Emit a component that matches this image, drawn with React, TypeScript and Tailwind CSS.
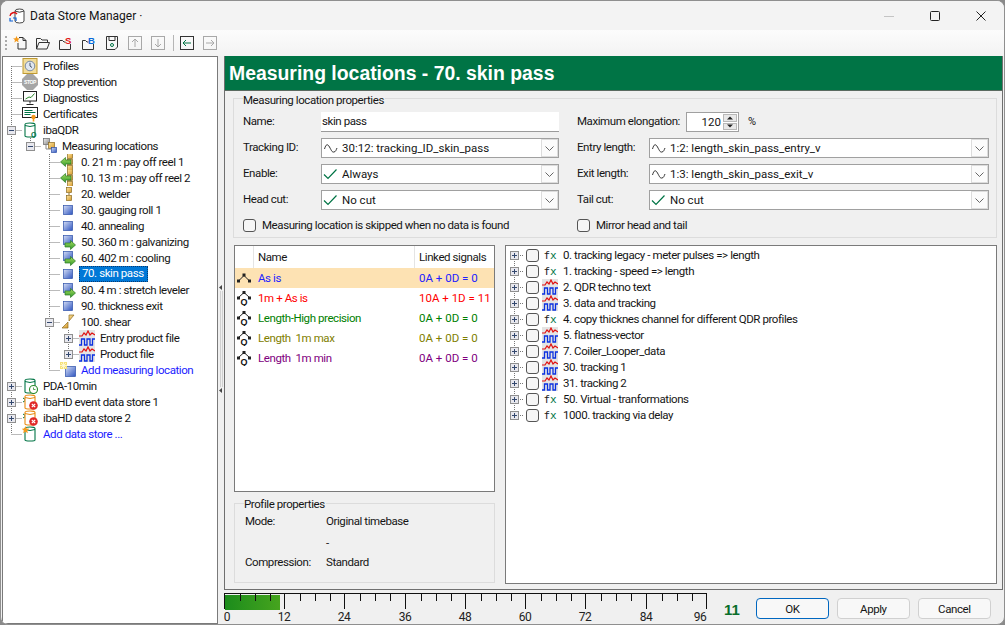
import React from "react";

function Exp({ open }: { open?: boolean }) {
  return (
    <svg width="9" height="9" viewBox="0 0 9 9" className="shrink-0">
      <rect x="0.5" y="0.5" width="8" height="8" fill="#e8e8ee" stroke="#8f8f8f" />
      <path d={open ? "M2 4.5h5" : "M2 4.5h5M4.5 2v5"} stroke="#33486e" />
    </svg>
  );
}

const Square = ({ x = 2, y = 2, s = 10, c = "blue" }: { x?: number; y?: number; s?: number; c?: "blue" | "gold" | "gray" }) => {
  const f = c === "blue" ? "url(#gb)" : c === "gold" ? "url(#gg)" : "url(#ggr)";
  const st = c === "blue" ? "#2c4fa8" : c === "gold" ? "#8a6a20" : "#666";
  return <rect x={x + 0.5} y={y + 0.5} width={s - 1} height={s - 1} fill={f} stroke={st} strokeWidth="0.7" />;
};

const Defs = () => (
  <svg width="0" height="0" className="absolute">
    <defs>
      <linearGradient id="gb" x1="0" y1="0" x2="1" y2="1">
        <stop offset="0" stopColor="#d5def5" />
        <stop offset="1" stopColor="#2f55c0" />
      </linearGradient>
      <linearGradient id="gg" x1="0" y1="0" x2="1" y2="1">
        <stop offset="0" stopColor="#fbe4a0" />
        <stop offset="1" stopColor="#d89a2a" />
      </linearGradient>
      <linearGradient id="ggr" x1="0" y1="0" x2="1" y2="1">
        <stop offset="0" stopColor="#eee" />
        <stop offset="1" stopColor="#888" />
      </linearGradient>
      <linearGradient id="ga" x1="0" y1="0" x2="0" y2="1">
        <stop offset="0" stopColor="#a8dc60" />
        <stop offset="1" stopColor="#2f9a2a" />
      </linearGradient>
    </defs>
  </svg>
);

const I = ({ children, w = 16, h = 16 }: { children: React.ReactNode; w?: number; h?: number }) => (
  <svg width={w} height={h} viewBox={`0 0 ${w} ${h}`} className="shrink-0 block">
    {children}
  </svg>
);

const ArrowL = () => <path d="M0.5 8 L5.5 3.5 V6 H11 V10 H5.5 V12.5 Z" fill="url(#ga)" stroke="#2a7a22" strokeWidth="0.7" />;
const ArrowR = () => <path d="M15.5 11 L10.5 6.5 V9 H5 V13 H10.5 V15.5 Z" fill="url(#ga)" stroke="#2a7a22" strokeWidth="0.7" />;

const IcoColL = () => (
  <I>
    <Square x={7} y={-1} s={6} c="gold" />
    <Square x={7} y={5} s={6} c="gold" />
    <Square x={7} y={11} s={6} c="gold" />
    <ArrowL />
  </I>
);
const IcoWeld = () => (
  <I>
    <Square x={6} y={1} s={6} c="gold" />
    <path d="M9 7v2" stroke="#8a6a20" />
    <Square x={6} y={9} s={6} c="gold" />
  </I>
);
const IcoBlue = () => (
  <I>
    <Square x={3} y={3} s={10} />
  </I>
);
const IcoBlueR = () => (
  <I>
    <Square x={3} y={1} s={10} />
    <ArrowR />
  </I>
);
const IcoShear = () => (
  <I>
    <path d="M8 8 L2 14 H8 Z" fill="url(#gg)" stroke="#8a6a20" strokeWidth="0.7" />
    <path d="M9 7 L14 1 H9 Z" fill="url(#gg)" stroke="#8a6a20" strokeWidth="0.7" />
  </I>
);
const IcoLocs = () => (
  <I>
    <Square x={2} y={0} s={7} c="gray" />
    <Square x={7} y={4} s={7} c="gold" />
    <Square x={10} y={9} s={6} c="blue" />
    <path d="M5 7v4h5" stroke="#888" fill="none" />
  </I>
);
const IcoSig = () => (
  <I>
    <rect x="0" y="0" width="16" height="16" fill="#e4e4e4" />
    <path d="M0 6 L3 6 L5 3 L7 5 L9 1 L11 5 L13 3 L16 5" stroke="#e01010" strokeWidth="1.2" fill="none" />
    <path d="M0 15 H2.5 V9 H5.5 V15 H8 V9 H11 V15 H13.5 V9 H16" stroke="#0a30e0" strokeWidth="1.3" fill="none" />
  </I>
);
const IcoFx = () => (
  <span className="w-[16px] shrink-0 flex justify-center text-[11px] leading-none tracking-[0px] font-['DejaVu_Sans_Mono',monospace]">
    <span className="text-[#222]">f</span>
    <span className="text-[#007445]">x</span>
  </span>
);
const Cyl = ({ c = "#007445" }: { c?: string }) => (
  <>
    <path d="M3 2.5 Q3 1 8 1 Q13 1 13 2.5 V14 Q13 15 8 15 Q3 15 3 14 Z" fill="#fff" stroke={c} strokeWidth="1.1" />
    <path d="M3 3.5 Q8 5.5 13 3.5" fill="none" stroke={c} strokeWidth="1" />
  </>
);
const IcoQdr = () => (
  <I>
    <Cyl />
    <text x="9" y="14.5" fontSize="7" fontWeight="700" fill="#007445" fontFamily="Liberation Sans">Q</text>
  </I>
);
const IcoPda = () => (
  <I>
    <Cyl />
    <circle cx="11.5" cy="11.5" r="4" fill="#fff" stroke="#2a8a2a" strokeWidth="1.1" />
    <path d="M11.5 9.5v2h2" stroke="#2a8a2a" fill="none" strokeWidth="0.8" />
  </I>
);
const IcoHd = () => (
  <I>
    <path d="M1 4 L4 6 L1 8" stroke="#007445" fill="none" />
    <Cyl c="#e88a10" />
    <circle cx="11.5" cy="11.5" r="4.3" fill="#e02828" />
    <path d="M9.8 9.8l3.4 3.4M13.2 9.8l-3.4 3.4" stroke="#fff" strokeWidth="1.2" />
  </I>
);
const Star = ({ x = 4, y = 4, r = 3.6 }: { x?: number; y?: number; r?: number }) => {
  const p = Array.from({ length: 10 }, (_, i) => {
    const a = -Math.PI / 2 + (i * Math.PI) / 5;
    const q = i % 2 ? r * 0.45 : r;
    return `${(x + q * Math.cos(a)).toFixed(2)},${(y + q * Math.sin(a)).toFixed(2)}`;
  }).join(" ");
  return <polygon points={p} fill="#f59a1b" />;
};
const IcoAddStore = () => (
  <I>
    <Cyl />
    <Star x={3.5} y={4} r={4} />
  </I>
);
const IcoAddLoc = () => (
  <I>
    <Square x={5} y={4} s={11} />
    <rect x="0" y="0" width="7" height="7" fill="#f6e27a" />
    <path d="M3.5 0v7M0 3.5h7M1 1l5 5M6 1l-5 5" stroke="#fffbe0" strokeWidth="0.8" />
  </I>
);
const IcoProfiles = () => (
  <I>
    <rect x="1" y="0.5" width="14" height="15" fill="#f1dc9a" stroke="#c09a30" />
    <circle cx="8" cy="8" r="4.8" fill="#dfe6ef" stroke="#7b8aa0" />
    <path d="M8 4.8V8l2 1.5" stroke="#44536a" fill="none" />
  </I>
);
const IcoStop = () => (
  <I>
    <polygon points="5,0 11,0 16,5 16,11 11,16 5,16 0,11 0,5" fill="#a6a6a6" />
    <text x="8" y="10" fontSize="5" textAnchor="middle" fontWeight="700" fill="#fff" fontFamily="Liberation Sans">STOP</text>
  </I>
);
const IcoDiag = () => (
  <I>
    <rect x="1.5" y="1.5" width="13" height="9.5" fill="#fff" stroke="#222" />
    <path d="M3.5 9 L7 7 L9 7.5 L12.5 3.5" stroke="#2a8a2a" fill="none" />
    <path d="M8 11v2.5M4.5 14.5h7" stroke="#222" />
  </I>
);
const IcoCert = () => (
  <I>
    <rect x="0.5" y="1.5" width="15" height="10" fill="#fff" stroke="#222" />
    <path d="M2.5 4.5h8M2.5 6.5h11M2.5 8.5h6" stroke="#007445" />
    <circle cx="11.5" cy="11" r="2.2" fill="#f59a1b" />
    <path d="M11.5 12v3.5" stroke="#f59a1b" strokeWidth="1.6" />
  </I>
);

const ProfIco = ({ q }: { q?: boolean }) => (
  <I>
    {q ? (
      <>
        <path d="M2.5 7.5 L8 2.5 L13.5 7.5" stroke="#222" fill="none" />
        <rect x="6.5" y="1" width="3" height="3" fill="#222" />
        <rect x="1" y="6.5" width="3" height="3" fill="#222" />
        <rect x="12" y="6.5" width="3" height="3" fill="#222" />
        <text x="8" y="15" fontSize="9" fontWeight="700" textAnchor="middle" letterSpacing="0" fill="#111" fontFamily="Liberation Sans">Q</text>
      </>
    ) : (
      <>
        <path d="M2.5 11 L8 5.5 L13.5 11" stroke="#222" fill="none" />
        <rect x="6.5" y="3.5" width="3" height="3" fill="#222" />
        <rect x="1" y="9.5" width="3" height="3" fill="#222" />
        <rect x="12" y="9.5" width="3" height="3" fill="#222" />
      </>
    )}
  </I>
);

const Sine = () => (
  <svg width="15" height="12" viewBox="0 0 15 12" className="shrink-0">
    <path d="M1.5 7 C3 2 4.5 1.5 6.5 5 S 9 10.5 11 10 S 13 8 14 6" fill="none" stroke="#333" strokeWidth="1" />
  </svg>
);
const Check = () => (
  <svg width="15" height="12" viewBox="0 0 15 12" className="shrink-0">
    <path d="M1 6.5 L5 10.5 L13.5 1.5" fill="none" stroke="#007445" strokeWidth="1.2" />
  </svg>
);

function Combo({ icon, text, cls }: { icon: React.ReactNode; text: string; cls: string }) {
  return (
    <div className={`h-[20px] bg-white border border-[#a0a0a0] flex items-center pl-[1px] ${cls}`}>
      {icon}
      <span className="ml-[4px] flex-1 truncate tracking-[0px]">{text}</span>
      <div className="w-[17px] h-[18px] border border-[#dcdcdc] bg-[#fbfbfb] flex items-center justify-center">
        <svg width="9" height="5" viewBox="0 0 9 5">
          <path d="M0.5 0.5 L4.5 4.5 L8.5 0.5" fill="none" stroke="#666" />
        </svg>
      </div>
    </div>
  );
}

const Box = () => <div className="w-[13px] h-[13px] rounded-[3px] border border-[#555] bg-[#f6f6f6] shrink-0" />;

type Row = { l: number; t: string; i: React.ReactNode; e?: "o" | "c"; link?: boolean; sel?: boolean };
const rows: Row[] = [
  { l: 0, t: "Profiles", i: <IcoProfiles /> },
  { l: 0, t: "Stop prevention", i: <IcoStop /> },
  { l: 0, t: "Diagnostics", i: <IcoDiag /> },
  { l: 0, t: "Certificates", i: <IcoCert /> },
  { l: 0, t: "ibaQDR", i: <IcoQdr />, e: "o" },
  { l: 1, t: "Measuring locations", i: <IcoLocs />, e: "o" },
  { l: 2, t: "0. 21 m : pay off reel 1", i: <IcoColL /> },
  { l: 2, t: "10. 13 m : pay off reel 2", i: <IcoColL /> },
  { l: 2, t: "20. welder", i: <IcoWeld /> },
  { l: 2, t: "30. gauging roll 1", i: <IcoBlue /> },
  { l: 2, t: "40. annealing", i: <IcoBlue /> },
  { l: 2, t: "50. 360 m : galvanizing", i: <IcoBlueR /> },
  { l: 2, t: "60. 402 m : cooling", i: <IcoBlueR /> },
  { l: 2, t: "70. skin pass", i: <IcoBlue />, sel: true },
  { l: 2, t: "80. 4 m : stretch leveler", i: <IcoBlueR /> },
  { l: 2, t: "90. thickness exit", i: <IcoBlue /> },
  { l: 2, t: "100. shear", i: <IcoShear />, e: "o" },
  { l: 3, t: "Entry product file", i: <IcoSig />, e: "c" },
  { l: 3, t: "Product file", i: <IcoSig />, e: "c" },
  { l: 2, t: "Add measuring location", i: <IcoAddLoc />, link: true },
  { l: 0, t: "PDA-10min", i: <IcoPda />, e: "c" },
  { l: 0, t: "ibaHD event data store 1", i: <IcoHd />, e: "c" },
  { l: 0, t: "ibaHD data store 2", i: <IcoHd />, e: "c" },
  { l: 0, t: "Add data store ...", i: <IcoAddStore />, link: true },
];
const indent = ["pl-[4px]", "pl-[23px]", "pl-[42px]", "pl-[61px]"];

function TreeLines() {
  const d: string[] = [];
  const h = (x1: number, x2: number, y: number) => d.push(`M${x1 - 3 + 0.5} ${y - 57 + 0.5}H${x2 - 3}`);
  const v = (x: number, y1: number, y2: number) => d.push(`M${x - 3 + 0.5} ${y1 - 57}V${y2 - 57}`);
  v(11, 66, 434);
  [66, 82, 98, 114, 130, 386, 402, 418, 434].forEach((y) => h(11, 22, y));
  v(30, 130, 146);
  h(30, 41, 146);
  v(49, 146, 370);
  for (let y = 162; y <= 322; y += 16) h(49, 60, y);
  h(49, 60, 370);
  v(68, 322, 354);
  h(68, 79, 338);
  h(68, 79, 354);
  return (
    <svg className="absolute left-0 top-0 pointer-events-none" width="215" height="400">
      <path d={d.join("")} stroke="#777" strokeDasharray="1 1" fill="none" />
    </svg>
  );
}

function Tree() {
  return (
    <div className="relative w-[216px] bg-white border border-[#7a7a7a] pt-[1px] overflow-hidden">
      <TreeLines />
      {rows.map((r) => (
        <div key={r.t} className={`relative flex items-center h-[16px] ${indent[r.l]}`}>
          {r.e ? <Exp open={r.e === "o"} /> : <div className="w-[9px]" />}
          <div className="ml-[6px] w-[16px] bg-white">{r.i}</div>
          <span
            className={
              r.sel
                ? "ml-[3px] pl-[3px] w-[69px] h-[16px] leading-[15px] bg-[#0078d7] text-white outline-1 outline-dotted outline-offset-[-1px] outline-[#0a3a70]"
                : `ml-[5px] whitespace-nowrap ${r.link ? "text-[#1a1aff]" : ""}`
            }
          >
            {r.t}
          </span>
        </div>
      ))}
    </div>
  );
}

const TIco = ({ children }: { children: React.ReactNode }) => (
  <div className="w-[14px] h-[14px] shrink-0">
    <svg width="14" height="14" viewBox="0 0 14 14" className="block">
      {children}
    </svg>
  </div>
);
const Fold = () => <path d="M0.5 13 V2.5 H4.5 L6 4 H11.5 V6 M0.5 13 H11 L13.5 6.5 H3 L0.5 13" fill="none" stroke="#333" />;
const Fold2 = () => <path d="M0.5 13.5 V4.5 H3.5 L5 6 H6.5 M0.5 13.5 H11.5 V8" fill="none" stroke="#333" />;

function Toolbar() {
  return (
    <div className="h-[26px] shrink-0 flex items-center pl-[4px] bg-gradient-to-b from-[#fcfcfc] to-[#f3f3f3]">
      <div className="w-[2px] h-[14px] border-l-2 border-dotted border-[#aaa] mr-[6px]" />
      <div className="flex items-center gap-[9px]">
        <TIco>
          <path d="M6 1.5H10L13 4.5V13H5V7" fill="none" stroke="#333" />
          <path d="M10 1.5V4.5H13" fill="none" stroke="#333" />
          <Star x={3.5} y={3.5} r={3.6} />
        </TIco>
        <TIco>
          <Fold />
        </TIco>
        <TIco>
          <Fold2 />
          <text x="6" y="7.5" fontSize="9.5" fontWeight="700" fill="#e01010" fontFamily="Liberation Sans">S</text>
        </TIco>
        <TIco>
          <Fold2 />
          <text x="6" y="7.5" fontSize="9.5" fontWeight="700" fill="#0a6ad8" fontFamily="Liberation Sans">B</text>
        </TIco>
        <TIco>
          <path d="M1.5 0.5H12.5V11L10 13.5H1.5Z" fill="none" stroke="#333" />
          <path d="M4 0.5V4.5H10V0.5" fill="none" stroke="#333" />
          <circle cx="7" cy="9" r="1.5" fill="none" stroke="#007445" />
        </TIco>
        <TIco>
          <rect x="0.5" y="0.5" width="13" height="13" fill="none" stroke="#a8a8a8" />
          <path d="M7 11V3M4 6l3-3 3 3" fill="none" stroke="#a8a8a8" />
        </TIco>
        <TIco>
          <rect x="0.5" y="0.5" width="13" height="13" fill="none" stroke="#a8a8a8" />
          <path d="M7 3v8M4 8l3 3 3-3" fill="none" stroke="#a8a8a8" />
        </TIco>
        <div className="w-px h-[16px] bg-[#b5b5b5] -ml-[1px] -mr-[3px]" />
        <TIco>
          <rect x="0.5" y="0.5" width="13" height="13" fill="none" stroke="#333" />
          <path d="M11 7H3M6 4L3 7l3 3" fill="none" stroke="#007445" />
        </TIco>
        <TIco>
          <rect x="0.5" y="0.5" width="13" height="13" fill="none" stroke="#a8a8a8" />
          <path d="M3 7h8M8 4l3 3-3 3" fill="none" stroke="#a8a8a8" />
        </TIco>
      </div>
    </div>
  );
}

function Group({ title, cls, lt, children }: { title: string; cls: string; lt: string; children: React.ReactNode }) {
  return (
    <div className={`relative border border-[#dcdcdc] ${cls}`}>
      <span className={`absolute left-[9px] ${lt} bg-[#f0f0f0] leading-[16px] pr-[1px]`}>{title}</span>
      {children}
    </div>
  );
}

const Lbl = ({ w, t }: { w: string; t: string }) => <span className={`${w} mb-[2px] whitespace-nowrap`}>{t}</span>;

const profiles = [
  { n: "As is", s: "0A + 0D = 0", c: "text-[#2222ff]", q: false, b: "bg-[#fde2b3]" },
  { n: "1m + As is", s: "10A + 1D = 11", c: "text-[#ff0000]", q: true, b: "" },
  { n: "Length-High precision", s: "0A + 0D = 0", c: "text-[#008000]", q: true, b: "" },
  { n: "Length  1m max", s: "0A + 0D = 0", c: "text-[#808000]", q: true, b: "" },
  { n: "Length  1m min", s: "0A + 0D = 0", c: "text-[#800080]", q: true, b: "" },
];

const modules: [string, boolean][] = [
  ["0. tracking legacy - meter pulses => length", true],
  ["1. tracking - speed => length", true],
  ["2. QDR techno text", false],
  ["3. data and tracking", false],
  ["4. copy thicknes channel for different QDR profiles", true],
  ["5. flatness-vector", false],
  ["7. Coiler_Looper_data", false],
  ["30. tracking 1", false],
  ["31. tracking 2", false],
  ["50. Virtual - tranformations", true],
  ["1000. tracking via delay", true],
];

function Ruler() {
  const majors = [0.5, 60.5, 120.5, 181.5, 241.5, 301.5, 361.5, 422.5, 482.5];
  const labels = ["0", "12", "24", "36", "48", "60", "72", "84", "96"];
  const ld = [3, 60, 120, 181, 241, 301, 361, 422, 476];
  const ticks: number[] = [];
  for (let i = 0; i < 8; i++) for (let k = 1; k < 4; k++) ticks.push(Math.round(majors[i] + 15 * k) + 0.5);
  return (
    <svg width="484" height="34" viewBox="0 0 484 34" className="block shrink-0">
      <defs>
        <linearGradient id="rb" x1="0" x2="1" y1="0" y2="0">
          <stop offset="0" stopColor="#1c8c1c" />
          <stop offset="1" stopColor="#46a41e" />
        </linearGradient>
      </defs>
      <rect x="1" y="5" width="55" height="15" fill="url(#rb)" />
      <path d="M0 3.5H483" stroke="#111" />
      {majors.map((m) => (
        <path key={m} d={`M${m} 3V19`} stroke="#111" />
      ))}
      {ticks.map((t) => (
        <path key={t} d={`M${t} 3V11`} stroke="#111" />
      ))}
      {labels.map((l, i) => (
        <text key={l} x={ld[i]} y="31" fontSize="12" textAnchor="middle" fill="#222" fontFamily="Roboto">
          {l}
        </text>
      ))}
    </svg>
  );
}

const Btn = ({ t, primary }: { t: string; primary?: boolean }) => (
  <div
    className={`w-[73px] h-[21px] rounded-[4px] flex items-center justify-center bg-[#f8f8f8] border ${
      primary ? "border-[#0067c0] border-[1.5px]" : "border-[#d0d0d0]"
    }`}
  >
    {t}
  </div>
);

export default function App() {
  return (
    <div className="w-[1005px] h-[625px] bg-[#8a8a8a] overflow-hidden">
      <Defs />
      <div className="w-full h-full rounded-[8px] border border-[#8f8f8f] bg-[#f0f0f0] flex flex-col overflow-hidden text-[11.5px] leading-[16px] text-[#151515] font-['Roboto',sans-serif] tracking-[-0.42px]">
        <div className="h-[29px] shrink-0 bg-[#f3f3f3] flex items-center pl-[8px]">
          <svg width="16" height="16" viewBox="0 0 16 16" className="shrink-0">
            <path d="M6 3 Q6 1 10.5 1 Q15 1 15 3 V13 Q15 15 10.5 15 Q6 15 6 13 Z M6 3 Q10.5 5.5 15 3" fill="#fff" stroke="#444" />
            <path d="M1 8 A4 4 0 0 1 8 6" stroke="#e01010" fill="none" strokeWidth="1.4" />
            <path d="M1 10 V13 H4 M4 10 H7 V13" stroke="#0a60d8" fill="none" strokeWidth="1.2" />
          </svg>
          <span className="ml-[5px] tracking-[0px] text-[12px]">Data Store Manager ·</span>
          <div className="ml-auto flex items-center">
            <div className="w-[46px] h-[29px] flex items-center justify-center">
              <svg width="10" height="10" viewBox="0 0 10 10"><path d="M0 5.5H10" stroke="#c4c4c4" /></svg>
            </div>
            <div className="w-[46px] h-[29px] flex items-center justify-center">
              <svg width="10" height="10" viewBox="0 0 10 10"><rect x="0.5" y="0.5" width="9" height="9" rx="1" fill="none" stroke="#222" /></svg>
            </div>
            <div className="w-[46px] h-[29px] flex items-center justify-center">
              <svg width="10" height="10" viewBox="0 0 10 10"><path d="M0.5 0.5L9.5 9.5M9.5 0.5L0.5 9.5" stroke="#222" /></svg>
            </div>
          </div>
        </div>
        <Toolbar />
        <div className="flex-1 flex min-h-0 pl-[1px]">
          <Tree />
          <div className="w-[6px] shrink-0 flex flex-col items-center">
            <svg width="6" height="7" viewBox="0 0 6 7" className="mt-[228px]"><path d="M1 3.5L4 1V6Z" fill="#444" /></svg>
            <div className="w-[3px] h-[96px] border-x border-[#d0d0d0]" />
            <svg width="6" height="7" viewBox="0 0 6 7"><path d="M1 3.5L4 1V6Z" fill="#444" /></svg>
          </div>
          <div className="flex-1 flex flex-col min-w-0 pr-[1px]">
            <div className="h-[535px] border border-[#6f6f6f] border-t-0 flex flex-col">
              <div className="h-[35px] shrink-0 bg-[#007445] border-b border-[#5a6a60] flex items-center pl-[4px] text-white text-[19.4px] font-bold font-['Liberation_Sans',sans-serif] tracking-[0px]">
                Measuring locations - 70. skin pass
              </div>
              <div className="flex-1 min-h-0 pt-[7px] pl-[8px] pr-[5px] flex flex-col">
                <Group title="Measuring location properties" lt="top-[-7px]" cls="h-[140px] pt-[13px] pl-[9px] flex gap-[18px]">
                  <div className="w-[316px] flex flex-col gap-[6px]">
                    <div className="flex items-center h-[20px]">
                      <Lbl w="w-[78px]" t="Name:" />
                      <div className="flex-1 h-[20px] bg-white border-b border-[#9a9a9a] pl-[1px] leading-[18px]">skin pass</div>
                    </div>
                    <div className="flex items-center">
                      <Lbl w="w-[78px]" t="Tracking ID:" />
                      <Combo cls="flex-1 min-w-0" icon={<Sine />} text="30:12: tracking_ID_skin_pass" />
                    </div>
                    <div className="flex items-center">
                      <Lbl w="w-[78px]" t="Enable:" />
                      <Combo cls="flex-1 min-w-0" icon={<Check />} text="Always" />
                    </div>
                    <div className="flex items-center">
                      <Lbl w="w-[78px]" t="Head cut:" />
                      <Combo cls="flex-1 min-w-0" icon={<Check />} text="No cut" />
                    </div>
                    <div className="flex items-center h-[16px] mt-[1px]">
                      <Box />
                      <span className="ml-[6px] whitespace-nowrap">Measuring location is skipped when no data is found</span>
                    </div>
                  </div>
                  <div className="w-[412px] flex flex-col gap-[6px]">
                    <div className="flex items-center h-[20px]">
                      <Lbl w="w-[109px]" t="Maximum elongation:" />
                      <div className="w-[53px] h-[20px] bg-white border border-[#a0a0a0] flex items-center justify-end">
                        <span className="mr-[2px] tracking-[0px]">120</span>
                        <div className="w-[14px] h-[16px] mr-[1px] flex flex-col gap-[1px]">
                          <div className="h-[8px] bg-[#e8e8e8] border border-[#b8b8b8] flex items-center justify-center">
                            <svg width="6" height="4" viewBox="0 0 6 4"><path d="M0 3.5L3 0.5L6 3.5Z" fill="#222" /></svg>
                          </div>
                          <div className="h-[8px] bg-[#e8e8e8] border border-[#b8b8b8] flex items-center justify-center">
                            <svg width="6" height="4" viewBox="0 0 6 4"><path d="M0 0.5L3 3.5L6 0.5Z" fill="#222" /></svg>
                          </div>
                        </div>
                      </div>
                      <span className="ml-[9px] text-[11px]">%</span>
                    </div>
                    <div className="flex items-center">
                      <Lbl w="w-[72px]" t="Entry length:" />
                      <Combo cls="w-[340px]" icon={<Sine />} text="1:2: length_skin_pass_entry_v" />
                    </div>
                    <div className="flex items-center">
                      <Lbl w="w-[72px]" t="Exit length:" />
                      <Combo cls="w-[340px]" icon={<Sine />} text="1:3: length_skin_pass_exit_v" />
                    </div>
                    <div className="flex items-center">
                      <Lbl w="w-[72px]" t="Tail cut:" />
                      <Combo cls="w-[340px]" icon={<Check />} text="No cut" />
                    </div>
                    <div className="flex items-center h-[16px] mt-[1px]">
                      <Box />
                      <span className="ml-[6px]">Mirror head and tail</span>
                    </div>
                  </div>
                </Group>
                <div className="flex gap-[10px] mt-[7px] ml-[1px] flex-1 min-h-0 pb-[5px]">
                  <div className="w-[261px] flex flex-col">
                    <div className="h-[247px] bg-white border border-[#7a7a7a]">
                      <div className="h-[22px] flex items-center">
                        <div className="w-[19px] h-full border-r border-[#e4e4e4]" />
                        <div className="w-[161px] h-full border-r border-[#e4e4e4] pl-[4px] leading-[22px]">Name</div>
                        <div className="pl-[4px] whitespace-nowrap">Linked signals</div>
                      </div>
                      {profiles.map((p) => (
                        <div key={p.n} className={`h-[20px] flex items-center ${p.b} ${p.c}`}>
                          <div className="w-[19px] pl-[1px]"><ProfIco q={p.q} /></div>
                          <div className="w-[161px] pl-[4px] whitespace-pre">{p.n}</div>
                          <div className="pl-[4px] whitespace-nowrap tracking-[0px]">{p.s}</div>
                        </div>
                      ))}
                    </div>
                    <Group title="Profile properties" lt="top-[-8px]" cls="mt-[11px] h-[80px] pl-[10px] pt-[9px]">
                      <div className="flex h-[16px]"><span className="w-[81px]">Mode:</span><span>Original timebase</span></div>
                      <div className="flex h-[16px] mt-[6px]"><span className="w-[81px]" /><span>-</span></div>
                      <div className="flex h-[16px] mt-[3px]"><span className="w-[81px]">Compression:</span><span>Standard</span></div>
                    </Group>
                  </div>
                  <div className="relative flex-1 bg-white border border-[#7a7a7a] pt-[1px]">
                    <svg className="absolute left-0 top-0 pointer-events-none" width="30" height="180">
                      <path d="M8.5 9V169" stroke="#777" strokeDasharray="1 1" />
                    </svg>
                    {modules.map(([t, fx]) => (
                      <div key={t} className="relative h-[16px] flex items-center pl-[4px]">
                        <Exp />
                        <svg width="3" height="1" className="mx-[1px]"><path d="M0 .5H3" stroke="#777" strokeDasharray="1 1" /></svg>
                        <div className="ml-[2px]"><Box /></div>
                        <div className="ml-[3px]">{fx ? <IcoFx /> : <IcoSig />}</div>
                        <span className="ml-[5px] whitespace-nowrap">{t}</span>
                      </div>
                    ))}
                  </div>
                </div>
              </div>
            </div>
            <div className="flex-1 flex items-start">
              <Ruler />
              <span className="ml-[16px] mt-[11px] text-[15px] leading-[18px] font-bold text-[#0a6e2a] font-['Liberation_Sans',sans-serif] tracking-[0px]">11</span>
              <div className="ml-[16px] mt-[8px] flex gap-[8px]">
                <Btn t="OK" primary />
                <Btn t="Apply" />
                <Btn t="Cancel" />
              </div>
            </div>
          </div>
        </div>
      </div>
    </div>
  );
}
